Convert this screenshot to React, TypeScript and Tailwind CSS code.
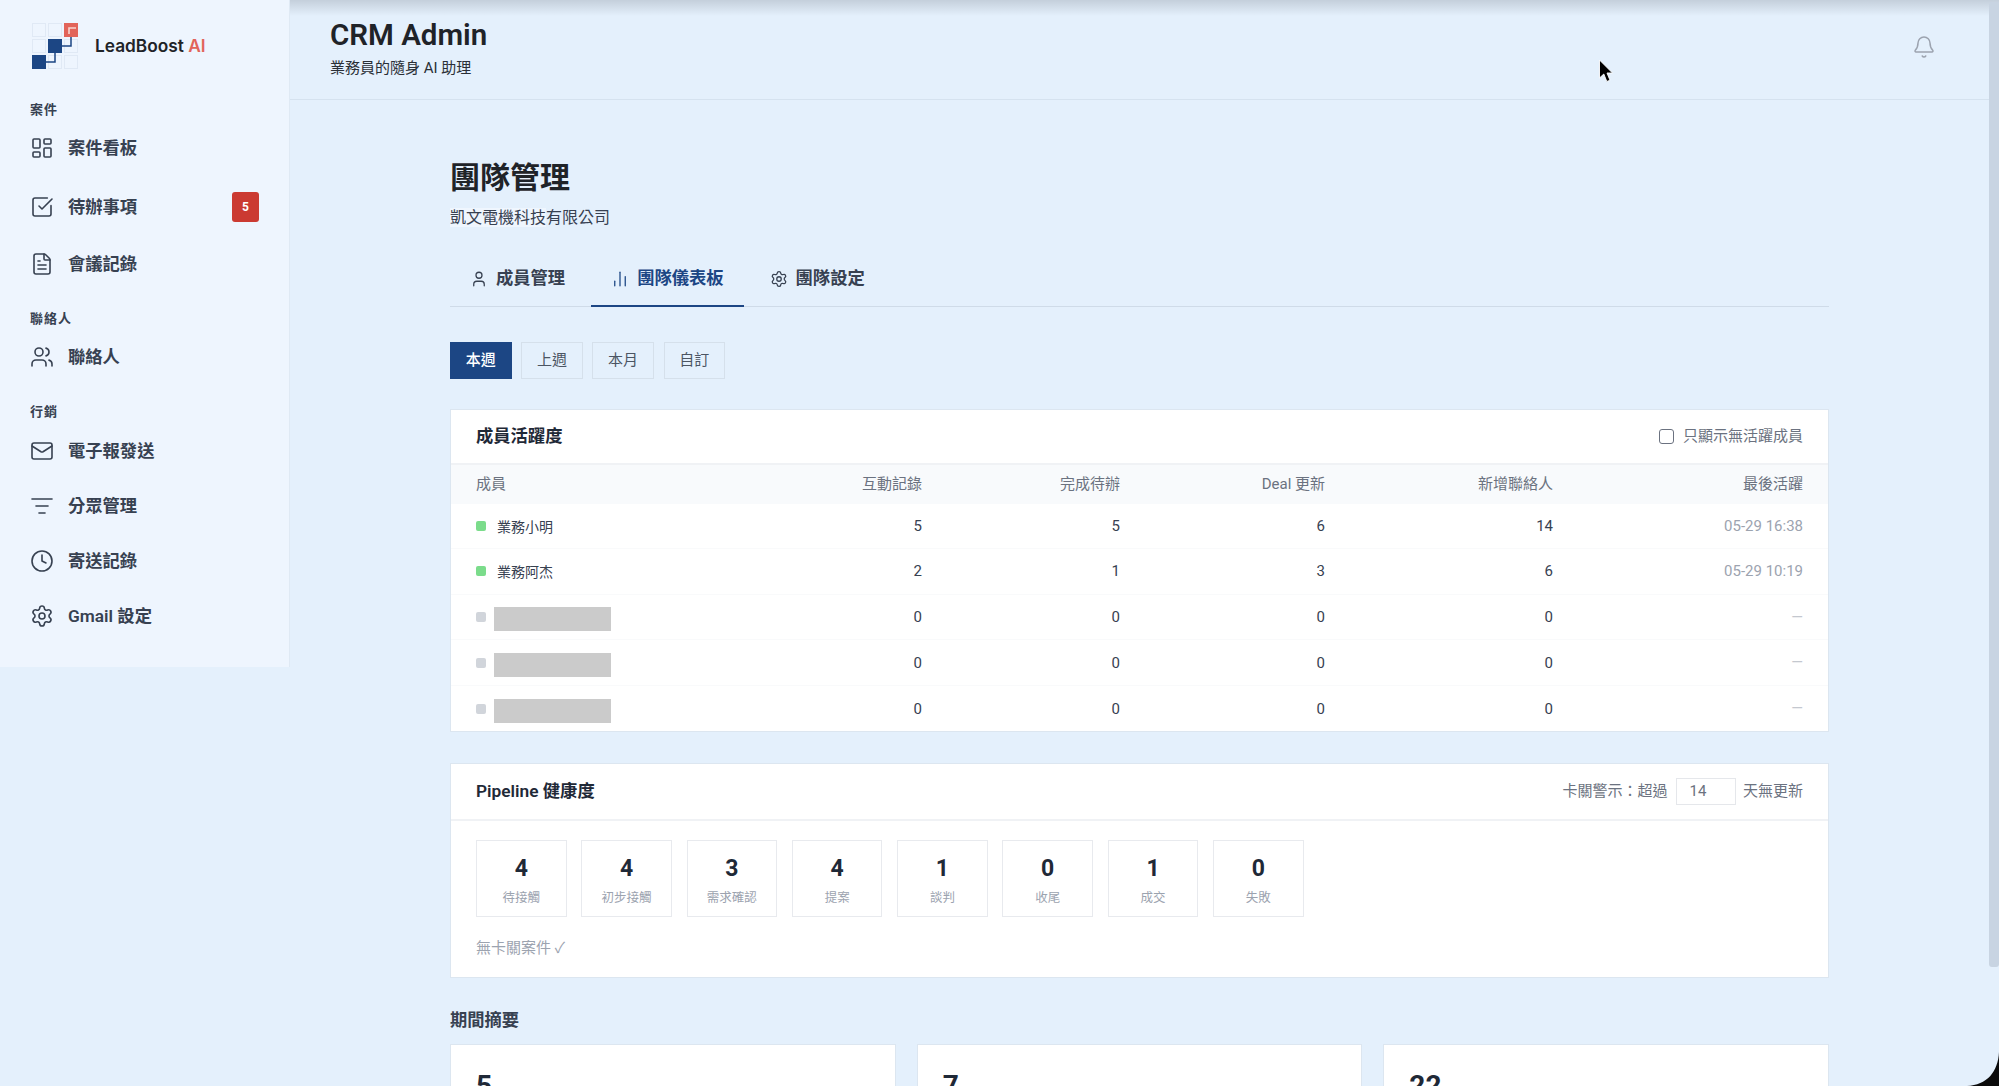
import React from "react";
import {
  LayoutDashboard,
  SquareCheckBig,
  FileText,
  Users,
  Mail,
  ListFilter,
  Clock,
  Settings,
  Bell,
  User,
  ChartNoAxesColumn,
} from "lucide-react";

const FONT = "font-['Roboto','Noto_Sans_CJK_TC',sans-serif]";

function Logo() {
  return (
    <svg width="46" height="46" viewBox="0 0 46 46" className="shrink-0">
      {[0, 16, 32].map((y) =>
        [0, 16, 32].map((x) => (
          <rect key={`${x}-${y}`} x={x + 0.5} y={y + 0.5} width="13" height="13" fill="none" stroke="#e0e9f5" strokeWidth="1" />
        ))
      )}
      <path d="M14 39H23V30" fill="none" stroke="#1c4684" strokeWidth="1.5" />
      <path d="M30 23H39V14" fill="none" stroke="#1c4684" strokeWidth="1.5" />
      <rect x="0" y="32" width="14" height="14" fill="#1c4684" />
      <rect x="16" y="16" width="14" height="14" fill="#1c4684" />
      <rect x="32" y="0" width="14" height="14" fill="#e2645a" />
      <path d="M37 11V5H44" fill="none" stroke="#f7d5d0" strokeWidth="1.6" />
    </svg>
  );
}

function GroupLabel({ children, className }: { children: React.ReactNode; className: string }) {
  return (
    <div className={`pl-[30px] text-[13px] leading-[16px] font-semibold tracking-[1px] text-[#374151] ${className}`}>{children}</div>
  );
}

function NavItem({ icon, label, badge, className }: { icon: React.ReactNode; label: string; badge?: string; className: string }) {
  return (
    <div className={`flex h-[24px] items-center pr-[30px] pl-[30px] text-[17.3px] font-semibold text-[#374151] ${className}`}>
      <span className="flex h-[24px] w-[24px] items-center justify-center">{icon}</span>
      <span className="ml-[14px] leading-[24px]">{label}</span>
      {badge && (
        <span className="ml-auto flex h-[30px] w-[27px] items-center justify-center rounded-[3px] bg-[#cb3a32] text-[12px] font-bold text-white">
          {badge}
        </span>
      )}
    </div>
  );
}

function Sidebar() {
  const ic = "h-[24px] w-[24px]";
  const s = 1.6;
  return (
    <aside className="h-[667px] w-[290px] shrink-0 border-r border-[#dfe9f4] bg-[#eef5fe]">
      <div className="flex h-[92px] items-center pl-[32px]">
        <Logo />
        <span className="ml-[17px] font-['Inter',sans-serif] text-[17.3px] font-semibold text-[#1f2328]">
          LeadBoost <span className="text-[#e2645a]">AI</span>
        </span>
      </div>
      <GroupLabel className="mt-[10px]">案件</GroupLabel>
      <NavItem className="mt-[18px]" icon={<LayoutDashboard className={ic} strokeWidth={s} />} label="案件看板" />
      <NavItem className="mt-[35px]" icon={<SquareCheckBig className={ic} strokeWidth={s} />} label="待辦事項" badge="5" />
      <NavItem className="mt-[33px]" icon={<FileText className={ic} strokeWidth={s} />} label="會議記錄" />
      <GroupLabel className="mt-[35px]">聯絡人</GroupLabel>
      <NavItem className="mt-[18px]" icon={<Users className={ic} strokeWidth={s} />} label="聯絡人" />
      <GroupLabel className="mt-[35px]">行銷</GroupLabel>
      <NavItem className="mt-[19px]" icon={<Mail className={ic} strokeWidth={s} />} label="電子報發送" />
      <NavItem className="mt-[31px]" icon={<ListFilter className={ic} strokeWidth={s} />} label="分眾管理" />
      <NavItem className="mt-[31px]" icon={<Clock className={ic} strokeWidth={s} />} label="寄送記錄" />
      <NavItem className="mt-[31px]" icon={<Settings className={ic} strokeWidth={s} />} label="Gmail 設定" />
    </aside>
  );
}

function Header() {
  return (
    <header className="flex h-[100px] shrink-0 items-start justify-between border-b border-[#d5e2ef] pr-[63px] pl-[40px]">
      <div>
        <div className="mt-[17px] text-[29.5px] leading-[36px] font-semibold text-[#1f2328]">CRM Admin</div>
        <div className="mt-[4px] text-[15px] leading-[22px] text-[#2a2f36]">業務員的隨身 AI 助理</div>
      </div>
      <Bell className="mt-[35px] h-[24px] w-[24px] text-[#9ca3af]" strokeWidth={1.5} />
    </header>
  );
}

function Tab({ icon, label, active }: { icon: React.ReactNode; label: string; active?: boolean }) {
  return (
    <div
      className={`-mb-px flex h-[55.5px] items-center gap-[8px] border-b-[2.5px] px-[20px] pt-[2px] text-[17.3px] font-semibold ${
        active ? "border-[#1c4684] text-[#1c4684]" : "border-transparent text-[#374151]"
      }`}
    >
      <span className="flex h-[18px] w-[18px] items-center justify-center">{icon}</span>
      {label}
    </div>
  );
}

function RangeBtn({ label, active }: { label: string; active?: boolean }) {
  return (
    <div
      className={`flex h-[37px] w-[61.5px] items-center justify-center border text-[15px] ${
        active ? "border-[#1c4684] bg-[#1c4684] font-medium text-white" : "border-[#d5e0eb] text-[#4b5563]"
      }`}
    >
      {label}
    </div>
  );
}

const rows = [
  { name: "業務小明", on: true, v: ["5", "5", "6", "14"], last: "05-29 16:38" },
  { name: "業務阿杰", on: true, v: ["2", "1", "3", "6"], last: "05-29 10:19" },
  { name: "", on: false, v: ["0", "0", "0", "0"], last: "—" },
  { name: "", on: false, v: ["0", "0", "0", "0"], last: "—" },
  { name: "", on: false, v: ["0", "0", "0", "0"], last: "—" },
];

const grid = "grid grid-cols-[247px_199px_198px_205px_228px_250px]";

function ActivityCard() {
  return (
    <section className="border border-[#dce6f0] bg-white">
      <div className="flex h-[55px] items-center justify-between border-b-2 border-[#f0f2f5] px-[25px]">
        <h2 className="text-[17.3px] font-semibold text-[#1f2937]">成員活躍度</h2>
        <label className="flex items-center gap-[9px] text-[15px] text-[#6b7280]">
          <span className="h-[15px] w-[15px] rounded-[3px] border-[1.5px] border-[#6b7280]" />
          只顯示無活躍成員
        </label>
      </div>
      <div className={`${grid} h-[38.5px] items-center bg-[#f8fafc] px-[25px] text-[15px] text-[#6b7280]`}>
        <div>成員</div>
        <div className="text-right">互動記錄</div>
        <div className="text-right">完成待辦</div>
        <div className="text-right">Deal 更新</div>
        <div className="text-right">新增聯絡人</div>
        <div className="text-right">最後活躍</div>
      </div>
      {rows.map((r, i) => (
        <div key={i} className={`${grid} h-[45.6px] items-center px-[25px] text-[15px] text-[#374151] ${i < 4 ? "border-b border-[#f9fafb]" : ""}`}>
          <div className="flex items-center">
            <span className={`h-[10px] w-[10px] rounded-[2px] ${r.on ? "bg-[#7bdc8b]" : "bg-[#d1d5db]"}`} />
            {r.name ? (
              <span className="mt-[3px] ml-[11px] text-[14px] text-[#374151]">{r.name}</span>
            ) : (
              <span className="mt-[5px] ml-[8px] h-[24px] w-[117px] bg-[#cbcbcb]" />
            )}
          </div>
          {r.v.map((n, j) => (
            <div key={j} className="text-right leading-[20px]">{n}</div>
          ))}
          <div className={`text-right ${r.on ? "text-[#9ca3af]" : "text-[#c4c8cf]"}`}>{r.last}</div>
        </div>
      ))}
    </section>
  );
}

const stages = [
  ["4", "待接觸"],
  ["4", "初步接觸"],
  ["3", "需求確認"],
  ["4", "提案"],
  ["1", "談判"],
  ["0", "收尾"],
  ["1", "成交"],
  ["0", "失敗"],
];

function PipelineCard() {
  return (
    <section className="mt-[30.5px] h-[215px] border border-[#dce6f0] bg-white">
      <div className="flex h-[57px] items-center justify-between border-b-2 border-[#f0f2f5] px-[25px]">
        <h2 className="text-[17.3px] font-semibold text-[#1f2937]">Pipeline 健康度</h2>
        <div className="flex items-center text-[15px] text-[#6b7280]">
          卡關警示：超過
          <span className="mr-[6.5px] ml-[9px] flex h-[27px] w-[60px] items-center border border-[#e5e7eb] pl-[12px] text-[#6b7280]">14</span>
          天無更新
        </div>
      </div>
      <div className="flex gap-[14.7px] pt-[19px] pl-[25px]">
        {stages.map(([n, l], i) => (
          <div key={i} className="flex h-[77px] w-[90.6px] flex-col items-center border border-[#e8eaee]">
            <div className="mt-[14px] text-[23px] leading-[28px] font-bold text-[#1f2937]">{n}</div>
            <div className="mt-[6px] text-[12.5px] leading-[18px] text-[#9ca3af]">{l}</div>
          </div>
        ))}
      </div>
      <div className="mt-[20px] pl-[25px] text-[15px] leading-[22px] text-[#9ca3af]">無卡關案件 ✓</div>
    </section>
  );
}

function SummaryCards() {
  return (
    <div className="mt-[12px] grid grid-cols-3 gap-[21px]">
      {["5", "7", "22"].map((n) => (
        <div key={n} className="h-[120px] border border-[#dce6f0] bg-white pt-[23px] pl-[25px]">
          <div className="text-[28px] leading-[36px] font-bold text-[#1f2937]">{n}</div>
        </div>
      ))}
    </div>
  );
}

function Overlays() {
  return (
    <>
      <div className="pointer-events-none absolute top-0 right-0 left-[290px] h-[16px] bg-gradient-to-b from-[#c4cfdb] to-transparent" />
      <div className="absolute top-[2px] right-0 h-[965px] w-[10px] rounded-[3px] bg-[#c8d4e2]" />
      <svg className="absolute top-[59px] left-[1598px]" width="16" height="25" viewBox="0 0 16 25">
        <path d="M1.5 1V19L5.8 15L8.8 22.5L12 21.2L9 14H14.5Z" fill="#000" stroke="#fff" strokeWidth="0.9" />
      </svg>
      <svg className="absolute right-0 bottom-0" width="32" height="34" viewBox="0 0 32 34">
        <path d="M32 0V34H0C20 33 31 20 32 0Z" fill="#0b0b0b" />
      </svg>
    </>
  );
}

export default function App() {
  return (
    <div className={`relative flex h-[1086px] w-full overflow-hidden bg-[#e4f0fc] ${FONT}`}>
      <Sidebar />
      <main className="flex min-w-0 flex-1 flex-col overflow-hidden">
        <Header />
        <div className="ml-[160px] w-[1379px] shrink-0 pt-[58px]">
          <h1 className="text-[30px] leading-[40px] font-semibold text-[#1f2328]">團隊管理</h1>
          <p className="mt-[8px] text-[16px] leading-[24px] text-[#374151]">
            <span className="bg-[#eff6fe]">凱文電機科技</span>有限公司
          </p>
          <div className="mt-[21.5px] flex gap-[6px] border-b border-[#cfdbe8]">
            <Tab icon={<User className="h-[18px] w-[18px]" strokeWidth={1.7} />} label="成員管理" />
            <Tab active icon={<ChartNoAxesColumn className="h-[18px] w-[18px]" strokeWidth={1.7} />} label="團隊儀表板" />
            <Tab icon={<Settings className="h-[18px] w-[18px]" strokeWidth={1.7} />} label="團隊設定" />
          </div>
          <div className="mt-[35px] flex gap-[9.7px]">
            <RangeBtn label="本週" active />
            <RangeBtn label="上週" />
            <RangeBtn label="本月" />
            <RangeBtn label="自訂" />
          </div>
          <div className="mt-[30px]">
            <ActivityCard />
            <PipelineCard />
            <h3 className="mt-[30px] text-[17.3px] leading-[24px] font-semibold text-[#374151]">期間摘要</h3>
            <SummaryCards />
          </div>
        </div>
      </main>
      <Overlays />
    </div>
  );
}
